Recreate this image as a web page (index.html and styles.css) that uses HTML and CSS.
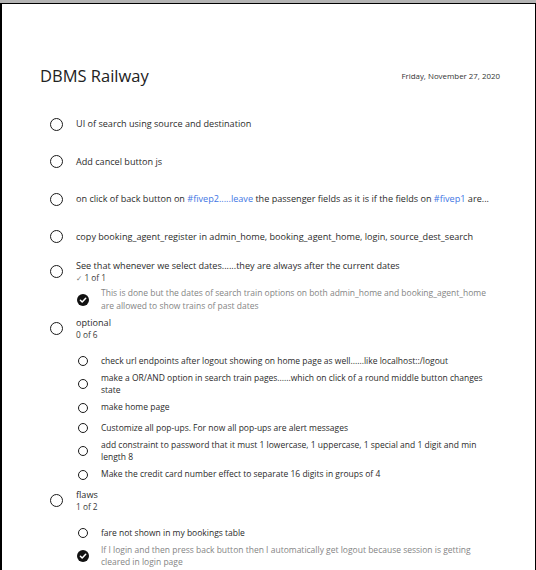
FILE: index.html
```html
<!DOCTYPE html>
<html>
<head>
<meta charset="utf-8">
<link rel="stylesheet" href="styles.css">
</head>
<body>
<div class="frame">
  <div class="window">
    <div class="page">
      <header class="header">
        <h1 class="title">DBMS Railway</h1>
        <span class="date">Friday, November 27, 2020</span>
      </header>

      <ul class="tasks">
        <li class="task">
          <span class="ring"></span>
          <span class="text">UI of search using source and destination</span>
        </li>
        <li class="task">
          <span class="ring"></span>
          <span class="text">Add cancel button js</span>
        </li>
        <li class="task">
          <span class="ring"></span>
          <span class="text clip">on click of back button on <span class="tag">#fivep2.....leave</span> the passenger fields as it is if the fields on <span class="tag">#fivep1</span> are...</span>
        </li>
        <li class="task">
          <span class="ring"></span>
          <span class="text">copy booking_agent_register in admin_home, booking_agent_home, login, source_dest_search</span>
        </li>

        <li class="task group">
          <div class="group-head">
            <span class="ring"></span>
            <div class="head-text">
              <div class="text">See that whenever we select dates......they are always after the current dates</div>
              <div class="count"><span class="tick">✓</span> 1 of 1</div>
            </div>
          </div>
          <ul class="subs s1">
            <li class="sub done">
              <span class="icon"><span class="checked"><svg viewBox="0 0 12 12" width="12" height="12"><circle cx="6" cy="6" r="6" fill="#111"/><path d="M3.4 6.2 L5.2 8 L8.7 4.2" fill="none" stroke="#fff" stroke-width="1.5" stroke-linecap="round" stroke-linejoin="round"/></svg></span></span>
              <span class="stext">This is done but the dates of search train options on both admin_home and booking_agent_home are allowed to show trains of past dates</span>
            </li>
          </ul>
        </li>

        <li class="task group">
          <div class="group-head">
            <span class="ring"></span>
            <div class="head-text">
              <div class="text">optional</div>
              <div class="count">0 of 6</div>
            </div>
          </div>
          <ul class="subs">
            <li class="sub"><span class="icon"><span class="ring small"></span></span><span class="stext">check url endpoints after logout showing on home page as well......like localhost::/logout</span></li>
            <li class="sub"><span class="icon"><span class="ring small"></span></span><span class="stext">make a OR/AND option in search train pages......which on click of a round middle button changes state</span></li>
            <li class="sub"><span class="icon"><span class="ring small"></span></span><span class="stext">make home page</span></li>
            <li class="sub"><span class="icon"><span class="ring small"></span></span><span class="stext">Customize all pop-ups. For now all pop-ups are alert messages</span></li>
            <li class="sub"><span class="icon"><span class="ring small"></span></span><span class="stext">add constraint to password that it must 1 lowercase, 1 uppercase, 1 special and 1 digit and min length 8</span></li>
            <li class="sub"><span class="icon"><span class="ring small"></span></span><span class="stext">Make the credit card number effect to separate 16 digits in groups of 4</span></li>
          </ul>
        </li>

        <li class="task group">
          <div class="group-head">
            <span class="ring"></span>
            <div class="head-text">
              <div class="text">flaws</div>
              <div class="count">1 of 2</div>
            </div>
          </div>
          <ul class="subs">
            <li class="sub"><span class="icon"><span class="ring small"></span></span><span class="stext">fare not shown in my bookings table</span></li>
            <li class="sub done">
              <span class="icon"><span class="checked"><svg viewBox="0 0 12 12" width="12" height="12"><circle cx="6" cy="6" r="6" fill="#111"/><path d="M3.4 6.2 L5.2 8 L8.7 4.2" fill="none" stroke="#fff" stroke-width="1.5" stroke-linecap="round" stroke-linejoin="round"/></svg></span></span>
              <span class="stext">If I login and then press back button then I automatically get logout because session is getting cleared in login page</span>
            </li>
          </ul>
        </li>
      </ul>
    </div>
  </div>
</div>
</body>
</html>
```

FILE: styles.css
```css
* { box-sizing: border-box; }

html, body {
  margin: 0;
  padding: 0;
  background: #fff;
}

body {
  width: 536px;
  height: 570px;
  overflow: hidden;
  font-family: "Open Sans", "Noto Sans", "DejaVu Sans", sans-serif;
  color: #2b2b2b;
}

.frame {
  border-top: 3px solid #b4b4b4;
  height: 570px;
}

.window {
  height: 567px;
  border-top: 1px solid #000;
  border-left: 2px solid #000;
  border-right: 1px solid #000;
  overflow: hidden;
}

.page {
  padding: 0 43px 0 38px;
}

.header {
  display: flex;
  justify-content: space-between;
  align-items: center;
  margin: 61px -8px 0 0;
  height: 22px;
}

.title {
  margin: 0;
  font-weight: 400;
  font-size: 16.5px;
  line-height: 22px;
  color: #222;
}

.date {
  font-size: 7.9px;
  color: #333;
}

.tasks {
  list-style: none;
  margin: 18.2px 0 0;
  padding: 0 0 0 10px;
}

.task {
  display: flex;
  align-items: center;
  gap: 13px;
  padding: 12.33px 0;
  font-size: 9.1px;
  line-height: 12px;
}

.ring {
  flex: none;
  width: 13px;
  height: 13px;
  border: 1.6px solid #1a1a1a;
  border-radius: 50%;
}

.ring.small {
  width: 10px;
  height: 10px;
  border-width: 1.5px;
}

.text {
  color: #2b2b2b;
  min-width: 0;
}

.clip {
  white-space: nowrap;
  overflow: hidden;
  text-overflow: ellipsis;
}

.tag {
  color: #3f76e4;
}

.group {
  display: block;
  padding: 4px 0 0;
}

.group-head {
  display: flex;
  align-items: center;
  gap: 13px;
}

.count {
  color: #3a3a3a;
  font-size: 8.3px;
}

.tick {
  color: #777;
  font-size: 7.5px;
}

.subs {
  list-style: none;
  margin: 10px 0 0;
  padding: 0 0 0 27px;
}

.s1 {
  margin-top: 3px;
}

.sub {
  display: flex;
  align-items: center;
  gap: 12px;
  min-height: 20.5px;
  padding: 0.5px 0;
  font-size: 8.5px;
  line-height: 12.5px;
}

.icon {
  flex: none;
  width: 12px;
  display: flex;
  justify-content: center;
  align-items: center;
}

.checked {
  display: block;
  width: 12px;
  height: 12px;
}

.checked svg {
  display: block;
}

.stext {
  color: #2b2b2b;
}

.sub.done .stext {
  color: #858585;
}
```
